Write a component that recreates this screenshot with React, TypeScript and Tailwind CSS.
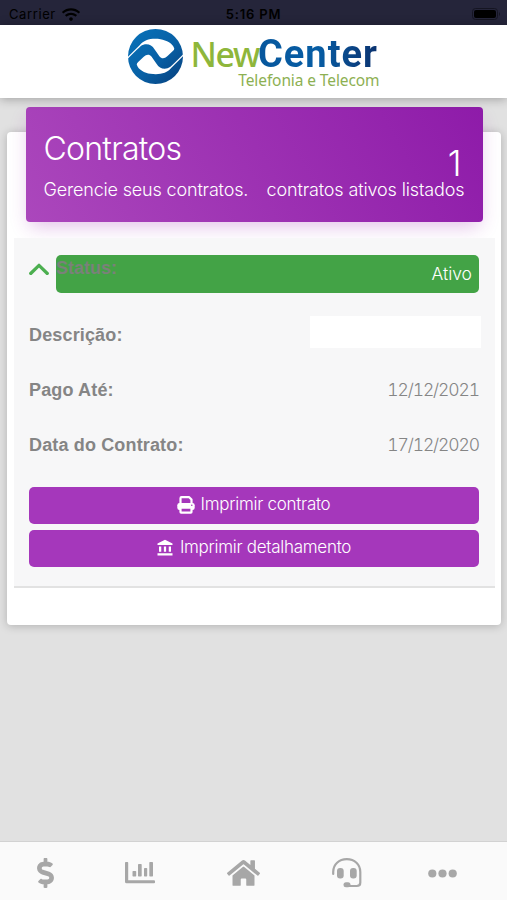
import type { ReactNode } from "react";
import { FaDollarSign, FaHome, FaWifi } from "react-icons/fa";
import { MdAccountBalance } from "react-icons/md";

const rows = [
  { label: "Descrição:", value: "" },
  { label: "Pago Até:", value: "12/12/2021" },
  { label: "Data do Contrato:", value: "17/12/2020" },
];

const CAVITY =
  "M7 90 L44 53 C56 37 80 32 105 36 C122 39 141 48 145 63 Q146 67 141 71 L127 84 C120 92 109 96 102 87 L87 66 C78 50 60 47 46 57 Q40 62 7 95 Z";

function LogoMark() {
  return (
    <svg viewBox="9 6 162 162" className="h-[55px] w-[55px]">
      <defs>
        <linearGradient id="mark" x1="0" y1="0" x2="1" y2="1">
          <stop offset="0" stopColor="#0873ba" />
          <stop offset="0.55" stopColor="#0860a5" />
          <stop offset="1" stopColor="#073e7b" />
        </linearGradient>
      </defs>
      <circle cx="90" cy="87" r="81" fill="url(#mark)" />
      <path d={CAVITY} fill="white" />
      <path d={CAVITY} fill="white" transform="rotate(180 90 87)" />
    </svg>
  );
}

function StatusBar() {
  return (
    <div className="grid h-[25px] shrink-0 grid-cols-3 items-center bg-[#25253a] px-[9px] pt-[3px] font-['Inter',sans-serif] text-[13px] leading-none text-black">
      <div className="flex items-center gap-[6px]">
        <span className="tracking-[0.6px]">Carrier</span>
        <FaWifi className="h-[15px] w-[18px]" />
      </div>
      <span className="text-center font-semibold tracking-[0.8px]">5:16 PM</span>
      <div className="flex justify-end">
        <svg viewBox="0 0 29 12" className="-mr-[3px] h-[12px] w-[29px]">
          <rect x="0.5" y="0.5" width="25" height="11" rx="3" fill="none" stroke="#151522" />
          <rect x="2" y="2" width="22" height="8" rx="2" fill="black" />
          <path d="M27 4v4q2-2 0-4" fill="#151522" />
        </svg>
      </div>
    </div>
  );
}

function Brand() {
  return (
    <header className="z-10 flex h-[73px] shrink-0 justify-center bg-white pt-[3.5px] shadow-[0_1px_10px_rgba(0,0,0,0.3)]">
      <LogoMark />
      <div className="ml-[8px] flex w-[189px] flex-col">
        <div className="flex h-[41px] items-start whitespace-nowrap text-[34px] leading-[50px]">
          <span className="font-['Noto_Sans',sans-serif] font-medium tracking-[-1.4px] text-[#8eb63b]">New</span>
          <span className="-ml-px bg-linear-to-r from-[#07579d] via-[#075da4] to-[#0a326f] bg-clip-text font-['Roboto',sans-serif] text-[38px] font-bold tracking-[1px] text-transparent">
            Center
          </span>
        </div>
        <span className="self-end whitespace-nowrap font-['Noto_Sans',sans-serif] text-[15.5px] leading-[20px] tracking-[-0.1px] text-[#8db052]">
          Telefonia e Telecom
        </span>
      </div>
    </header>
  );
}

function PrintIcon() {
  return (
    <svg viewBox="0 0 18 18" className="h-[18px] w-[18px]" fill="none" stroke="currentColor">
      <path d="M3.500 7V2.200q0-1 1-1h7.700l2.300 2.300V7" strokeWidth="2.200" strokeLinejoin="round" />
      <rect x="0.300" y="7" width="17.400" height="7" rx="2.200" fill="currentColor" stroke="none" />
      <rect x="3.500" y="11.700" width="11" height="5" rx="0.600" fill="#a537bb" strokeWidth="2.200" />
      <circle cx="14.800" cy="9.300" r="0.800" fill="#a537bb" stroke="none" />
    </svg>
  );
}

function ActionButton({ icon, children }: { icon: ReactNode; children: ReactNode }) {
  return (
    <button className="flex h-[37px] w-full items-center justify-center gap-[6px] rounded-[5px] bg-[#a537bb] pb-px pr-px font-['Inter',sans-serif] text-[17px] font-light tracking-[-0.28px] text-white">
      {icon}
      {children}
    </button>
  );
}

function ChartIcon() {
  return (
    <svg viewBox="0 0 30 24" className="h-[24px] w-[30px]" fill="currentColor">
      <path d="M0 1.5Q0 1 1 1h1.5q.7 0 .7.7v17.6H29q1 0 1 1v1.2q0 .8-1 .8H1.5Q0 22.300 0 20.800Z" />
      <rect x="7.500" y="10" width="3.700" height="5.500" rx="0.700" />
      <rect x="13" y="3" width="3.700" height="12.500" rx="0.700" />
      <rect x="19" y="7" width="3.200" height="8.500" rx="0.700" />
      <rect x="24.300" y="1" width="3.700" height="14.500" rx="0.700" />
    </svg>
  );
}

function HeadsetIcon() {
  return (
    <svg viewBox="0 0 30 30" className="h-[30px] w-[30px]">
      <path
        d="M1.200 16v-2C1.200 6.500 7 1.200 14.800 1.200S28.300 6.500 28.300 14v10.500q0 3.500-3.500 3.500H15"
        fill="none"
        stroke="currentColor"
        strokeWidth="2.200"
        strokeLinecap="round"
      />
      <rect x="5" y="10" width="6.700" height="10.500" rx="3" fill="currentColor" />
      <rect x="18" y="10" width="6.700" height="10.500" rx="3" fill="currentColor" />
      <rect x="11.500" y="24.200" width="7" height="5" rx="2.500" fill="currentColor" />
    </svg>
  );
}

function BottomNav() {
  return (
    <nav className="flex h-[59px] shrink-0 items-center border-t border-[#d2d2d2] bg-[#fafafa] pt-[4px] text-[#a7a7a7]">
      <div className="flex w-[90px] justify-center">
        <FaDollarSign className="h-[30px] w-[17px]" />
      </div>
      <div className="flex w-[99px] justify-center">
        <ChartIcon />
      </div>
      <div className="flex w-[108px] justify-center">
        <FaHome className="h-[32px] w-[33px]" />
      </div>
      <div className="flex w-[99px] justify-center">
        <HeadsetIcon />
      </div>
      <div className="flex w-[92px] justify-center">
        <svg viewBox="0 0 29 9" className="h-[9px] w-[29px]" fill="currentColor">
          <circle cx="4.300" cy="4.500" r="4.100" />
          <circle cx="14.500" cy="4.500" r="4.100" />
          <circle cx="24.700" cy="4.500" r="4.100" />
        </svg>
      </div>
    </nav>
  );
}

export default function App() {
  return (
    <div className="flex h-[900px] w-[507px] flex-col overflow-hidden bg-[#e1e1e1] font-['Liberation_Sans',sans-serif]">
      <StatusBar />
      <Brand />
      <main className="flex-1 pl-[7px] pr-[6px] pt-[34px]">
        <section className="flex h-[493px] flex-col rounded-[4px] bg-white pl-[7px] pr-[6px] shadow-[0_1px_10px_rgba(0,0,0,0.22)]">
          <div className="-mt-[25px] ml-[11.5px] mr-[12.5px] flex h-[115px] shrink-0 justify-between rounded-[4px] bg-linear-[60deg] from-[#ab47bc] to-[#8e1ba9] px-[18px] font-['Inter',sans-serif] font-light text-white shadow-[0_8px_18px_-4px_rgba(156,39,176,0.3)]">
            <div className="flex flex-col pt-[22px]">
              <h1 className="text-[32px] leading-[40px] tracking-[-0.75px]">Contratos</h1>
              <p className="mt-[11px] whitespace-nowrap text-[18px] leading-[20px] tracking-[-0.17px]">
                Gerencie seus contratos.
              </p>
            </div>
            <div className="flex flex-col items-end pt-[39px]">
              <span className="pr-[3px] text-[35px] leading-[34px]">1</span>
              <p className="whitespace-nowrap text-[18px] leading-[20px] tracking-[-0.13px]">contratos ativos listados</p>
            </div>
          </div>

          <div className="mt-[16px] flex h-[350px] flex-col border-b-2 border-[#e2e2e2] bg-[#f7f7f8] pl-[15px] pr-[16px] pt-[17px]">
            <div className="flex">
              <svg viewBox="0 0 20 12" className="mt-[8px] h-[12px] w-[20px]">
                <path d="M1.700 10.500 10 2.300l8.300 8.200" fill="none" stroke="#4caf50" strokeWidth="3.200" strokeLinecap="round" strokeLinejoin="round" />
              </svg>
              <div className="ml-[7px] flex h-[38px] flex-1 items-center justify-between rounded-[5px] bg-[#43a346] pr-[7px]">
                <b className="self-start pt-px text-[18px] leading-[24px] text-[#7a817a]">Status:</b>
                <span className="font-['Inter',sans-serif] text-[17.5px] font-light text-white">Ativo</span>
              </div>
            </div>
            <div className="mt-[14px] flex flex-col">
              {rows.map((row) => (
                <div key={row.label} className="flex h-[55px] items-center justify-between">
                  <b className="pt-px text-[18px] tracking-[0.15px] text-[#858585]">{row.label}</b>
                  {row.value ? (
                    <span className="pt-px font-['Inter',sans-serif] text-[17.5px] font-light tabular-nums tracking-[-1.1px] text-[#858585]">
                      {row.value}
                    </span>
                  ) : (
                    <span className="-mr-[2px] mb-[5px] h-[32px] w-[171px] bg-white" />
                  )}
                </div>
              ))}
            </div>
            <div className="mt-[15px] flex flex-col gap-[6px]">
              <ActionButton icon={<PrintIcon />}>Imprimir contrato</ActionButton>
              <ActionButton icon={<MdAccountBalance className="h-[18px] w-[18px]" />}>Imprimir detalhamento</ActionButton>
            </div>
          </div>
        </section>
      </main>
      <BottomNav />
    </div>
  );
}
